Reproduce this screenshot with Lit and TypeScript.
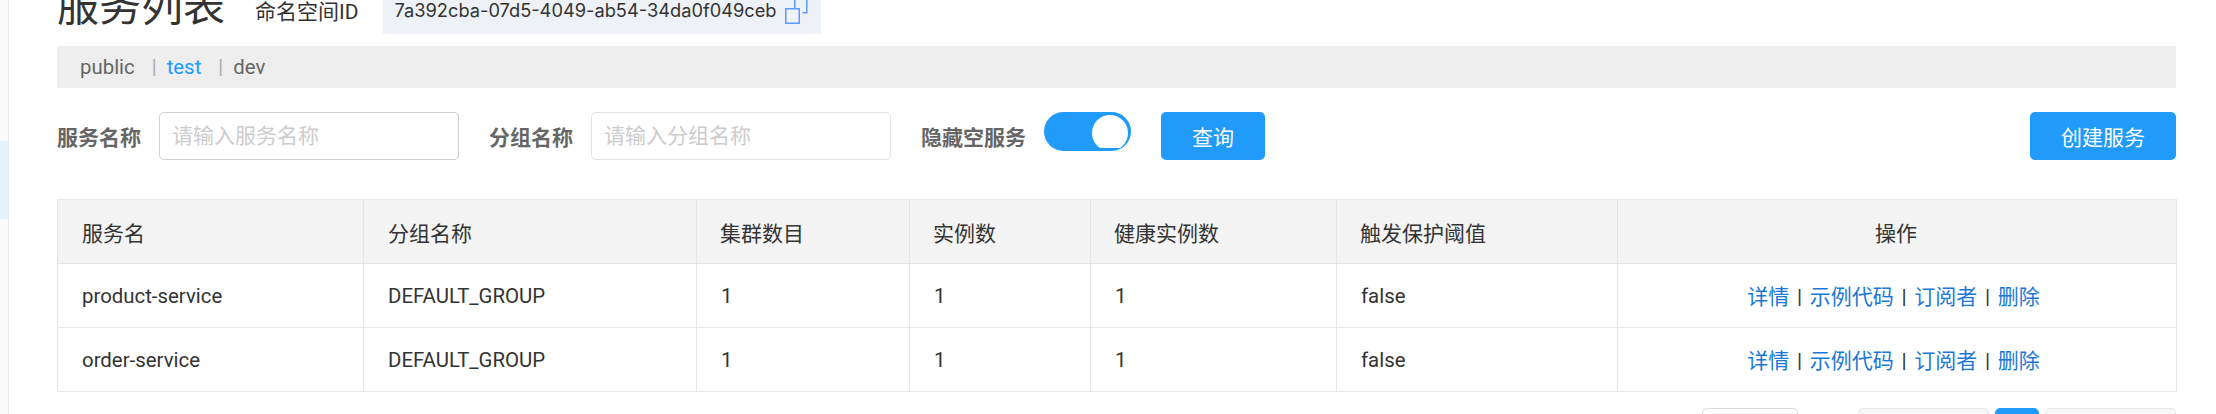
import { LitElement, html, css } from "lit";
import { customElement } from "lit/decorators.js";

const rows = [
  { name: "product-service", group: "DEFAULT_GROUP" },
  { name: "order-service", group: "DEFAULT_GROUP" },
];
const cols = ["服务名", "分组名称", "集群数目", "实例数", "健康实例数", "触发保护阈值"];

@customElement("app-root")
export class AppRoot extends LitElement {
  static styles = css`
    :host {
      display: flex;
      width: 2216px;
      height: 414px;
      overflow: hidden;
      background: #fff;
      color: #333;
      font-family: Roboto, "Noto Sans CJK SC", sans-serif;
      font-size: 21px;
    }
    .side {
      flex: none;
      width: 8px;
      border-right: 1px solid #e9e9e9;
      background: #fbfbfb;
      padding-top: 141px;
    }
    .side-active {
      height: 78px;
      background: #e5f3ff;
    }
    .main {
      flex: 1;
      min-width: 0;
      padding: 0 40px 0 48px;
    }
    .title-row {
      display: flex;
      align-items: center;
      height: 48px;
      margin-top: -14px;
    }
    h1 {
      margin: 0 30px 0 0;
      font-size: 42px;
      font-weight: 400;
      line-height: 48px;
      position: relative;
      top: -3px;
      color: #333;
    }
    .ns-label {
      margin-right: 24px;
    }
    .ns-id {
      display: flex;
      align-items: center;
      gap: 8px;
      height: 48px;
      padding: 0 13px 0 12px;
      background: #eef1f6;
      font-family: Inter, Roboto, sans-serif;
      font-size: 18.25px;
    }
    .copy {
      display: block;
      flex: none;
    }
    .tabs {
      display: flex;
      align-items: center;
      height: 42px;
      margin-top: 12px;
      padding-left: 23px;
      background: #eee;
      color: #666;
      font-size: 20.4px;
    }
    .tabs .on {
      color: #209bfa;
    }
    .tabs .sep {
      margin: 0 10px 0 17px;
      color: #aaa;
      font-size: 20px;
    }
    .search {
      display: flex;
      align-items: center;
      height: 48px;
      margin-top: 24px;
    }
    .search label {
      margin-right: 18px;
      font-weight: 700;
      color: #666;
    }
    input {
      box-sizing: border-box;
      width: 300px;
      height: 48px;
      margin-right: 30px;
      padding: 0 12px;
      border: 1px solid #e2e2e2;
      border-radius: 5px;
      outline: none;
      background: #fff;
      font: inherit;
    }
    input.first {
      border-color: #d0d0d0;
    }
    input::placeholder {
      color: #ccc;
      opacity: 1;
    }
    .toggle {
      box-sizing: border-box;
      display: flex;
      justify-content: flex-end;
      align-self: flex-start;
      width: 87px;
      height: 39px;
      margin-right: 30px;
      padding: 3px;
      border-radius: 20px;
      background: #209bfa;
    }
    .knob-clip {
      width: 36px;
      height: 33px;
      overflow: hidden;
    }
    .knob {
      width: 36px;
      height: 36px;
      border-radius: 50%;
      background: #fff;
    }
    button {
      height: 48px;
      padding: 0;
      border: 0;
      border-radius: 5px;
      background: #209bfa;
      color: #fff;
      font: inherit;
    }
    .query {
      width: 104px;
    }
    .create {
      width: 146px;
      margin-left: auto;
    }
    table {
      width: 2120px;
      margin-top: 39px;
      border-collapse: collapse;
      table-layout: fixed;
    }
    th,
    td {
      box-sizing: border-box;
      height: 64px;
      padding: 0 24px;
      border: 1px solid #e6e6e6;
      font-weight: 400;
      text-align: left;
      color: #333;
    }
    th {
      background: #f4f4f4;
    }
    td {
      font-size: 20.4px;
    }
    .c1 { width: 306px; }
    .c2 { width: 333px; }
    .c3 { width: 213px; }
    .c4 { width: 181px; }
    .c5 { width: 246px; }
    .c6 { width: 281px; }
    th.c3,
    th.c4,
    th.c5,
    th.c6 {
      padding-left: 23px;
    }
    th.ops,
    td.ops {
      text-align: center;
    }
    th.ops {
      padding-right: 26px;
    }
    td.ops {
      padding: 0 31px 2px 24px;
      font-size: 21px;
    }
    a {
      color: #1a78d8;
      text-decoration: none;
    }
    .pipe {
      margin: 0 2.5px;
    }
    .pager {
      display: flex;
      justify-content: flex-end;
      gap: 6px;
      margin-top: 16px;
    }
    .pager > div {
      box-sizing: border-box;
      height: 48px;
      border: 1px solid #e6e6e6;
      border-radius: 5px;
      background: #f7f7f7;
    }
    .pager .size {
      width: 96px;
      margin-right: 54px;
      border-color: #dcdcdc;
      background: #fff;
    }
    .pager .nav {
      width: 131px;
    }
    .pager .cur {
      width: 44px;
      border-color: #209bfa;
      background: #209bfa;
    }
  `;

  private actions() {
    const items = ["详情", "示例代码", "订阅者", "删除"];
    return items.map(
      (t, i) => html`${i > 0 ? html`<span class="pipe"> | </span>` : ""}<a href="#">${t}</a>`
    );
  }

  render() {
    return html`
      <div class="side"><div class="side-active"></div></div>
      <div class="main">
        <div class="title-row">
          <h1>服务列表</h1>
          <span class="ns-label">命名空间ID</span>
          <div class="ns-id">
            <span>7a392cba-07d5-4049-ab54-34da0f049ceb</span>
            <svg class="copy" width="23" height="27" viewBox="0 0 23 27" fill="none" stroke="#5b9bff" stroke-width="1.5">
              <rect x="0.75" y="11.75" width="13.5" height="14.5"></rect>
              <path d="M9.75 11V0.75H21.75V15.75H17.5"></path>
            </svg>
          </div>
        </div>
        <div class="tabs">
          <span>public</span><span class="sep">|</span><span class="on">test</span><span class="sep">|</span><span>dev</span>
        </div>
        <div class="search">
          <label>服务名称</label>
          <input class="first" placeholder="请输入服务名称" />
          <label>分组名称</label>
          <input placeholder="请输入分组名称" />
          <label>隐藏空服务</label>
          <div class="toggle"><div class="knob-clip"><div class="knob"></div></div></div>
          <button class="query">查询</button>
          <button class="create">创建服务</button>
        </div>
        <table>
          <thead>
            <tr>
              ${cols.map((c, i) => html`<th class="c${i + 1}">${c}</th>`)}
              <th class="ops">操作</th>
            </tr>
          </thead>
          <tbody>
            ${rows.map(
              (r) => html`<tr>
                <td>${r.name}</td>
                <td>${r.group}</td>
                <td>1</td>
                <td>1</td>
                <td>1</td>
                <td>false</td>
                <td class="ops">${this.actions()}</td>
              </tr>`
            )}
          </tbody>
        </table>
        <div class="pager">
          <div class="size"></div>
          <div class="nav"></div>
          <div class="cur"></div>
          <div class="nav"></div>
        </div>
      </div>
    `;
  }
}
